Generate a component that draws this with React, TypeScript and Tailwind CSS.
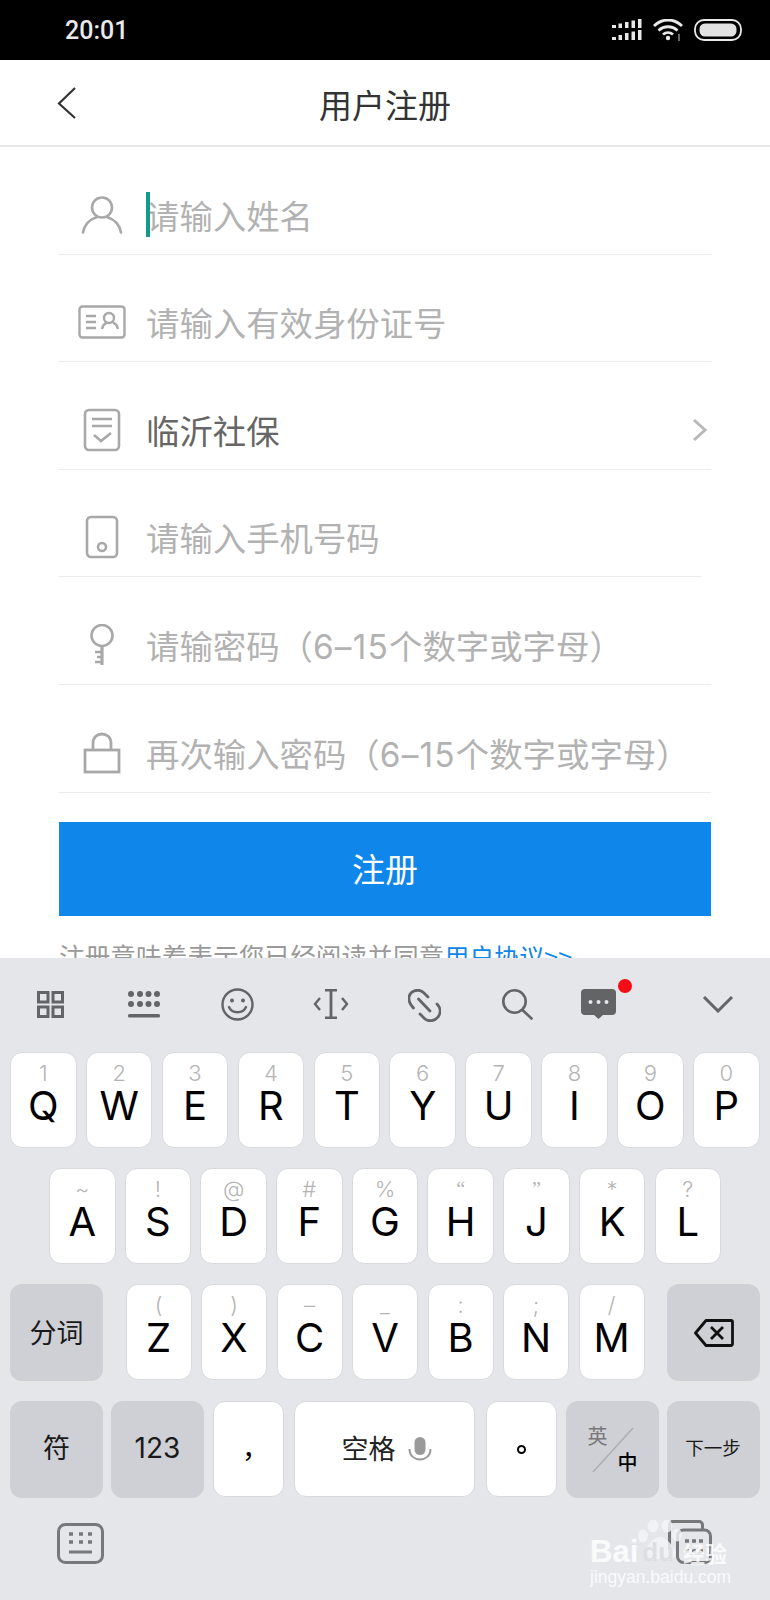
import React from "react";

const cjk = "font-['Noto_Sans_CJK_SC','Liberation_Sans',sans-serif]";
const latin = "font-['Inter','Noto_Sans_CJK_SC',sans-serif]";

const PersonIcon = () => (
  <svg width="42" height="38" viewBox="0 0 42 38" fill="none" stroke="#a8a8a8" strokeWidth="2.6">
    <circle cx="21" cy="11.500" r="10" />
    <path d="M2 36.500C3.500 28 10 23 16 21M40 36.500C38.500 28 32 23 26 21" strokeLinecap="round" />
  </svg>
);

const CardIcon = () => (
  <svg width="48" height="34" viewBox="0 0 48 34" fill="none" stroke="#a8a8a8" strokeWidth="2.4">
    <rect x="1.500" y="1.500" width="45" height="31" rx="3" />
    <path d="M8 11h10M8 17h10M8 23h10" />
    <circle cx="31" cy="13" r="5" />
    <path d="M24 24c1-5 4-6 5-6.500M40 24c-1-5-4-6-5-6.500" />
  </svg>
);

const DocIcon = () => (
  <svg width="38" height="44" viewBox="0 0 38 44" fill="none" stroke="#a8a8a8" strokeWidth="2.6">
    <rect x="2" y="2" width="34" height="40" rx="4" />
    <path d="M9 11h20M9 18h20M11 27l7 6 10-8" />
  </svg>
);

const PhoneIcon = () => (
  <svg width="34" height="44" viewBox="0 0 34 44" fill="none" stroke="#a8a8a8" strokeWidth="2.6">
    <rect x="2" y="2" width="30" height="40" rx="4" />
    <circle cx="17" cy="32" r="4" />
  </svg>
);

const KeyIcon = () => (
  <svg width="26" height="42" viewBox="0 0 26 42" fill="none" stroke="#a8a8a8" strokeWidth="2.6">
    <circle cx="13" cy="11.500" r="10.500" />
    <path d="M13 22v19" strokeWidth="3.200" />
    <path d="M6 28h7M8 33h5M6 38h7" strokeWidth="2.400" />
  </svg>
);

const LockIcon = () => (
  <svg width="38" height="42" viewBox="0 0 38 42" fill="none" stroke="#a8a8a8" strokeWidth="2.800">
    <rect x="2" y="18" width="34" height="22" />
    <path d="M10 18v-7c0-12 18-12 18 0v7" />
  </svg>
);

const RangeText = ({ before, after }: { before: string; after: string }) => (
  <>
    {before}
    <span className={`${latin} tracking-[1.200px]`}>6–15</span>
    {after}
  </>
);

const rows = [
  { id: "name", icon: <PersonIcon />, text: "请输入姓名", cursor: true },
  { id: "card", icon: <CardIcon />, text: "请输入有效身份证号" },
  { id: "type", icon: <DocIcon />, text: "临沂社保", value: true },
  { id: "phone", icon: <PhoneIcon />, text: "请输入手机号码", short: true },
  { id: "pwd", icon: <KeyIcon />, text: <RangeText before="请输密码（" after="个数字或字母）" /> },
  { id: "pwd2", icon: <LockIcon />, text: <RangeText before="再次输入密码（" after="个数字或字母）" /> },
];

const row1 = [
  ["1", "Q"], ["2", "W"], ["3", "E"], ["4", "R"], ["5", "T"],
  ["6", "Y"], ["7", "U"], ["8", "I"], ["9", "O"], ["0", "P"],
];
const row2 = [
  ["~", "A"], ["!", "S"], ["@", "D"], ["#", "F"], ["%", "G"],
  ["“", "H"], ["”", "J"], ["*", "K"], ["?", "L"],
];
const row3 = [
  ["(", "Z"], [")", "X"], ["–", "C"], ["_", "V"], [":", "B"], [";", "N"], ["/", "M"],
];

const whiteKey = "bg-white rounded-[12px] border border-[#d8d9dd] h-[96px]";
const grayKey = "bg-[#cfd0d5] rounded-[12px] h-[97px] flex items-center justify-center text-[#1a1a1a]";

const LetterKey = ({ hint, letter, className }: { hint: string; letter: string; className: string }) => (
  <div className={`${whiteKey} ${className} flex flex-col items-center pt-[8px] ${latin}`}>
    <span
      className={
        hint === "“" || hint === "”"
          ? "h-[24px] leading-[24px] text-[20px] text-[#b4b4b4] font-['Liberation_Serif',serif]"
          : "h-[24px] leading-[24px] text-[22px] font-light text-[#b4b4b4]"
      }
    >
      {hint}
    </span>
    <span className="mt-[1px] h-[40px] leading-[40px] text-[40px] text-black">{letter}</span>
  </div>
);

const toolIcon = "#636466";

export default function App() {
  return (
    <div className={`w-[770px] h-[1600px] overflow-hidden bg-[#e4e6ea] flex flex-col ${cjk}`}>
      {/* status bar */}
      <div className="h-[60px] bg-black flex items-center pl-[65px] pr-[28px] shrink-0">
        <span className="text-[25px] font-medium text-[#e9e9e9] font-['Roboto',sans-serif] leading-none">20:01</span>
        <div className="ml-auto flex items-center">
          <svg width="30" height="22" viewBox="0 0 30 22" fill="#e9e9e9">
            <rect x="0" y="6" width="4" height="3" />
            <rect x="6.500" y="4.500" width="3.500" height="4.500" />
            <rect x="13" y="3" width="3.500" height="6" />
            <rect x="19.500" y="1.500" width="3.500" height="7.500" />
            <rect x="26" y="0" width="3.500" height="9" />
            <rect x="0" y="18" width="4" height="3" />
            <rect x="6.500" y="16" width="3.500" height="5" />
            <rect x="13" y="14" width="3.500" height="7" />
            <rect x="19.500" y="12.500" width="3.500" height="8.500" />
            <rect x="26" y="11" width="3.500" height="10" />
          </svg>
          <svg className="ml-[11px]" width="30" height="22" viewBox="0 0 30 22" fill="none" stroke="#e9e9e9" strokeWidth="2.800">
            <path d="M1 7c8-8 20-8 28 0M5.500 11.500c5.500-5 13.500-5 19 0M10 15.500c3-2.500 7-2.500 10 0" />
            <circle cx="15" cy="19" r="2.200" fill="#e9e9e9" stroke="none" />
            <path d="M26 15v7" stroke="#8a8a8a" strokeWidth="1.500" />
          </svg>
          <svg className="ml-[11px]" width="48" height="22" viewBox="0 0 48 22" fill="none">
            <rect x="1" y="1" width="46" height="20" rx="9" stroke="#e9e9e9" strokeWidth="1.800" />
            <rect x="5.500" y="4.500" width="37" height="13" rx="5.500" fill="#e2e2e2" />
          </svg>
        </div>
      </div>

      {/* header + form, cut off by the keyboard */}
      <div className="h-[898px] bg-white overflow-hidden shrink-0">
        <div className="h-[87px] border-b-2 border-[#e8e8e8] flex items-center relative pt-[2px]">
          <svg className="absolute left-[57px] top-[26px]" width="20" height="34" viewBox="0 0 20 34" fill="none" stroke="#333" strokeWidth="2.200">
            <path d="M18 2 2 17.500 18 32" />
          </svg>
          <div className="w-full text-center text-[33px] leading-[40px] text-[#333]">用户注册</div>
        </div>

        <div className="px-[59px]">
          {rows.map((r) => (
            <div
              key={r.id}
              className={`h-[107.600px] border-b border-[#ececec] flex items-end pb-[17px] ${r.short ? "w-[642px]" : ""}`}
            >
              <div className="w-[86px] h-[44px] flex items-center justify-center shrink-0">{r.icon}</div>
              <div className={`relative h-[44px] pl-[1px] leading-[44px] text-[33.400px] whitespace-nowrap ${r.value ? "text-[#666]" : "text-[#b2b2b2]"}`}>
                {r.cursor && <span className="absolute left-[1px] top-[-1px] w-[4px] h-[45px] bg-[#139a8a]" />}
                {r.text}
              </div>
              {r.value && (
                <svg className="ml-auto mr-[3px] mb-[10px]" width="16" height="24" viewBox="0 0 16 24" fill="none" stroke="#b8b8b8" strokeWidth="3">
                  <path d="M2 2l11 10L2 22" />
                </svg>
              )}
            </div>
          ))}

          <button className="mt-[29px] w-[652px] h-[94px] bg-[#0f86ea] text-white text-[33px] block">注册</button>

          <p className="mt-[22px] text-[25.700px] leading-[36px] text-[#999] whitespace-nowrap">
            注册意味着表示您已经阅读并同意<span className="text-[#0f86ea] text-[25px]">用户协议&gt;&gt;</span>
          </p>
        </div>
      </div>

      {/* keyboard toolbar */}
      <div className="h-[94px] flex items-center relative shrink-0 pb-[2px]">
        <svg className="ml-[37px]" width="27" height="27" viewBox="0 0 27 27" fill="none" stroke={toolIcon} strokeWidth="3">
          <rect x="1.500" y="1.500" width="9.500" height="9.500" />
          <rect x="16" y="1.500" width="9.500" height="9.500" />
          <rect x="1.500" y="16" width="9.500" height="9.500" />
          <rect x="16" y="16" width="9.500" height="9.500" />
        </svg>
        <svg className="ml-[64px]" width="32" height="27" viewBox="0 0 32 27" fill={toolIcon}>
          <circle cx="3" cy="3" r="3" /><circle cx="12" cy="3" r="3" /><circle cx="20.500" cy="3" r="3" /><circle cx="29" cy="3" r="3" />
          <circle cx="3" cy="13" r="3" /><circle cx="12" cy="13" r="3" /><circle cx="20.500" cy="13" r="3" /><circle cx="29" cy="13" r="3" />
          <rect x="0" y="23" width="32" height="3.500" rx="1.500" />
        </svg>
        <svg className="ml-[61px]" width="33" height="33" viewBox="0 0 33 33" fill="none" stroke={toolIcon} strokeWidth="2.400">
          <circle cx="16.500" cy="16.500" r="15" />
          <circle cx="11" cy="12.500" r="2" fill={toolIcon} stroke="none" />
          <circle cx="22" cy="12.500" r="2" fill={toolIcon} stroke="none" />
          <path d="M8 19c3 7 14 7 17 0" strokeLinecap="round" />
        </svg>
        <svg className="ml-[59px]" width="36" height="30" viewBox="0 0 36 30" fill="none" stroke={toolIcon} strokeWidth="2.400">
          <path d="M12 1h12M12 29h12M18 1v28" strokeWidth="2.800" />
          <path d="M7 9 2 15l5 6M29 9l5 6-5 6" />
        </svg>
        <svg className="ml-[59px] mt-[3px]" width="33" height="33" viewBox="0 0 33 33" fill="none" stroke={toolIcon} strokeWidth="2.800" strokeLinecap="round">
          <path d="M5.500 19 3 16C-1 10 1 4 6 2c4-1.500 8 0 10 2l4 4" />
          <path d="M12 25l5 5c4 3 10 2 13-2s3-9-1-13" />
          <path d="M10.500 10 22 22" />
        </svg>
        <svg className="ml-[61px]" width="31" height="31" viewBox="0 0 31 31" fill="none" stroke={toolIcon} strokeWidth="2.600">
          <circle cx="12.500" cy="12.500" r="11.200" />
          <path d="m20.500 21 9 8.500" strokeLinecap="round" />
        </svg>
        <svg className="ml-[48px]" width="35" height="30" viewBox="0 0 35 30" fill={toolIcon}>
          <path d="M4 0h27a4 4 0 0 1 4 4v18a4 4 0 0 1-4 4h-9l-4.500 4-4.500-4H4a4 4 0 0 1-4-4V4a4 4 0 0 1 4-4z" />
          <circle cx="9.500" cy="13" r="2" fill="#e4e6ea" />
          <circle cx="17.500" cy="13" r="2" fill="#e4e6ea" />
          <circle cx="25.500" cy="13" r="2" fill="#e4e6ea" />
        </svg>
        <span className="absolute left-[618px] top-[21px] w-[14px] h-[14px] rounded-full bg-[#f50d16]" />
        <svg className="ml-[86px]" width="32" height="18" viewBox="0 0 32 18" fill="none" stroke={toolIcon} strokeWidth="3">
          <path d="M2 2l14 14L30 2" />
        </svg>
      </div>

      {/* keys */}
      <div className="flex flex-col gap-[20px] shrink-0">
        <div className="flex gap-[9.400px] pl-[10px]">
          {row1.map(([h, l]) => (
            <LetterKey key={l} hint={h} letter={l} className="w-[66.500px]" />
          ))}
        </div>
        <div className="flex gap-[9.200px] pl-[49px]">
          {row2.map(([h, l]) => (
            <LetterKey key={l} hint={h} letter={l} className="w-[66.500px]" />
          ))}
        </div>
        <div className="flex pl-[10px] gap-[22.500px]">
          <div className={`${grayKey} w-[93px] text-[27px]`}>分词</div>
          <div className="flex gap-[9.500px]">
            {row3.map(([h, l]) => (
              <LetterKey key={l} hint={h} letter={l} className="w-[66px]" />
            ))}
          </div>
          <div className={`${grayKey} w-[93px]`}>
            <svg width="40" height="28" viewBox="0 0 40 28" fill="none" stroke="#111" strokeWidth="2.800" strokeLinejoin="round">
              <path d="M12 1.500h25a1.500 1.500 0 0 1 1.500 1.500v22a1.500 1.500 0 0 1-1.500 1.500H12L1.500 14z" />
              <path d="M17 8l12 12M29 8 17 20" />
            </svg>
          </div>
        </div>
        <div className="flex pl-[10px] gap-[9px]">
          <div className={`${grayKey} w-[93px] text-[27px] pb-[4px]`}>符</div>
          <div className={`${grayKey} w-[93px] text-[28px] -ml-[1px] pb-[4px] ${latin}`}>123</div>
          <div className={`${whiteKey} w-[71px] flex items-center justify-center text-[27px] text-black pl-[14px] pb-[4px]`}>，</div>
          <div className={`${whiteKey} w-[181px] ml-[1px] flex items-center justify-center text-[27px] text-[#222] pl-[4px] pb-[2px]`}>
            <span>空格</span>
            <svg className="ml-[12px] mt-[3px]" width="24" height="25" viewBox="0 0 24 25" fill="none">
              <rect x="6.500" y="0" width="11" height="18" rx="5.500" fill="#9a9a9a" />
              <path d="M1.500 12c0 14 21 14 21 0" stroke="#9a9a9a" strokeWidth="2" />
            </svg>
          </div>
          <div className={`${whiteKey} w-[71px] ml-[1.500px] flex items-center justify-center text-[27px] text-black`}>
            <span className="w-[9px] h-[9px] rounded-full border-2 border-black" />
          </div>
          <div className={`${grayKey} w-[93px] relative`}>
            <span className="absolute left-[22px] top-[22px] text-[20px] leading-[26px] text-[#777]">英</span>
            <span className="absolute left-[52px] top-[48px] text-[20px] leading-[26px] font-medium text-black">中</span>
            <svg className="absolute left-[26px] top-[26px]" width="42" height="46" viewBox="0 0 42 46" fill="none" stroke="#aeaeb2" strokeWidth="1.500">
              <path d="M1 45 41 1" />
            </svg>
          </div>
          <div className={`${grayKey} w-[93px] text-[18.500px] -ml-[1px] pb-[4px]`}>下一步</div>
        </div>
      </div>

      {/* bottom bar */}
      <div className="relative flex-1 flex items-start justify-between pl-[57px] pr-[58px] pt-[25px]">
        <svg width="47" height="41" viewBox="0 0 47 41" fill="none" stroke="#77787a" strokeWidth="3">
          <rect x="1.500" y="1.500" width="44" height="38" rx="7" />
          <path d="M12 11h4M22 11h4M31 11h4M12 19h4M22 19h4M31 19h4" strokeWidth="3.400" />
          <path d="M12 29h23" />
        </svg>
        <svg className="-mt-[3px]" width="44" height="44" viewBox="0 0 44 44" fill="none" stroke="#77787a" strokeWidth="3">
          <path d="M1.500 30V5a3.500 3.500 0 0 1 3.500-3.500h26A3.500 3.500 0 0 1 34.500 5v5" />
          <rect x="9.500" y="10" width="33" height="32.500" rx="6" />
          <path d="M17 21h18M17 31h18" strokeDasharray="4 3" strokeWidth="3.400" />
        </svg>

        {/* Baidu watermark */}
        <div className="absolute left-[590px] top-[22px] w-[140px] flex flex-col pt-[19px] text-white/80">
          <svg className="absolute left-[48px] top-0" width="44" height="46" viewBox="0 0 44 46" fill="#f4f5f7" fillOpacity="0.8">
            <ellipse cx="5" cy="16" rx="5" ry="6.500" />
            <ellipse cx="15" cy="6" rx="5.500" ry="6.500" />
            <ellipse cx="29" cy="6" rx="5.500" ry="6.500" />
            <ellipse cx="39" cy="15" rx="5" ry="6.500" />
            <path d="M22 17c7 0 10 7 14 11 4 5 1 12-6 12-3 0-5-1-8-1s-5 1-8 1c-7 0-10-7-6-12 4-4 7-11 14-11z" />
          </svg>
          <div className="relative flex items-end h-[26px] leading-[26px] font-bold whitespace-nowrap">
            <span className="text-[31px] font-['Liberation_Sans',sans-serif]">Bai</span>
            <span className="ml-[4px] text-[26px] text-[#dcdee2] font-['Liberation_Sans',sans-serif]">du</span>
            <span className="ml-[9px] text-[22px]">经验</span>
          </div>
          <span className="relative mt-[4px] h-[17px] text-[17.500px] leading-[17px] whitespace-nowrap font-['Liberation_Sans',sans-serif]">
            jingyan.baidu.com
          </span>
        </div>
      </div>
    </div>
  );
}
